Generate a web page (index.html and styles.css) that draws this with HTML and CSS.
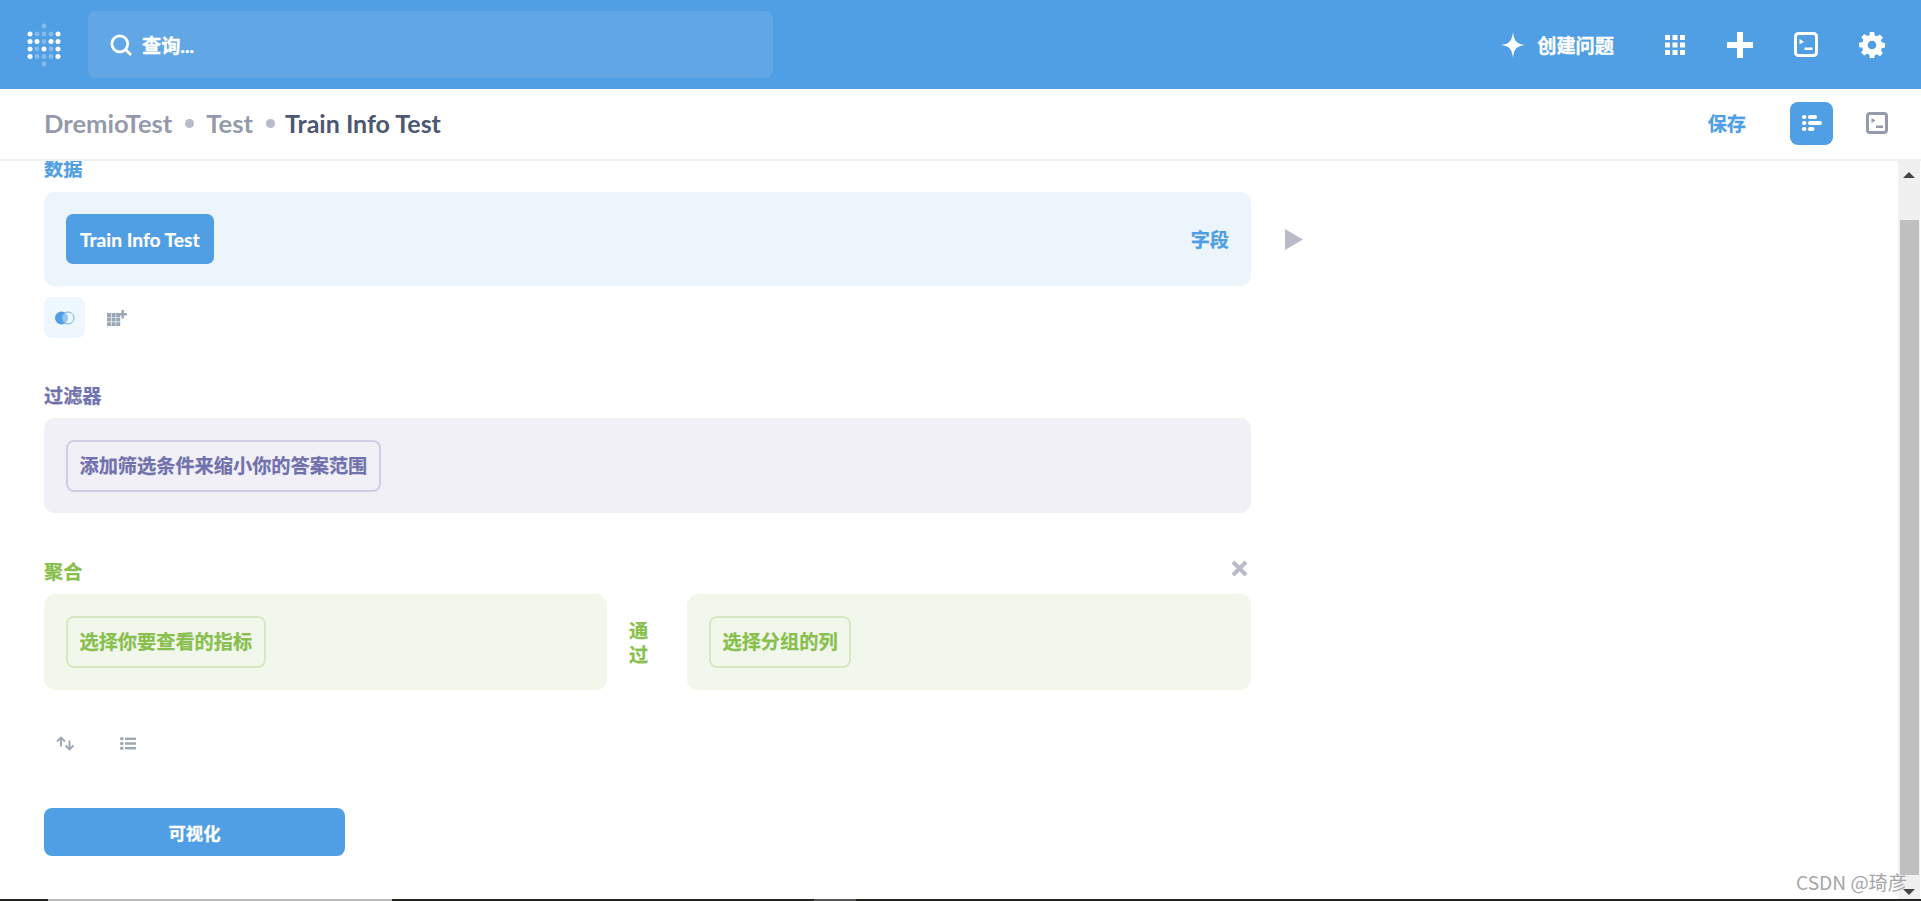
FILE: index.html
```html
<!DOCTYPE html>
<html lang="zh">
<head>
<meta charset="utf-8">
<title>Train Info Test</title>
<link rel="stylesheet" href="styles.css">
</head>
<body>
<div class="app">
  <header class="topbar">
    <svg class="logo" width="36" height="44" viewBox="0 0 36 44">
      <g fill="#fff" fill-opacity=".3">
        <circle cx="18" cy="3" r="2.4"/><circle cx="11" cy="11" r="2.4"/><circle cx="18" cy="11" r="2.4"/><circle cx="25" cy="11" r="2.4"/>
        <circle cx="18" cy="18.500" r="2.4"/><circle cx="11" cy="26" r="2.4"/><circle cx="25" cy="26" r="2.4"/>
        <circle cx="11" cy="33.500" r="2.4"/><circle cx="18" cy="33.500" r="2.4"/><circle cx="25" cy="33.500" r="2.4"/><circle cx="18" cy="41" r="2.4"/>
      </g>
      <g fill="#fff">
        <circle cx="4" cy="11" r="2.500"/><circle cx="32" cy="11" r="2.500"/>
        <circle cx="4" cy="18.500" r="2.500"/><circle cx="11" cy="18.500" r="2.500"/><circle cx="25" cy="18.500" r="2.500"/><circle cx="32" cy="18.500" r="2.500"/>
        <circle cx="4" cy="26" r="2.500"/><circle cx="18" cy="26" r="2.500"/><circle cx="32" cy="26" r="2.500"/>
        <circle cx="4" cy="33.500" r="2.500"/><circle cx="32" cy="33.500" r="2.500"/>
      </g>
    </svg>
    <div class="search">
      <svg width="22" height="22" viewBox="0 0 22 22" fill="none" stroke="#fff" stroke-width="2.800"><circle cx="9.800" cy="9.800" r="8"/><path d="M15.500 15.500l5.500 5.500"/></svg>
      <span>查询...</span>
    </div>
    <div class="top-actions">
      <div class="ask">
        <svg width="24" height="26" viewBox="0 0 24 26"><path fill="#fff" d="M12 0C13.200 9 15.200 11.800 24 13 15.200 14.200 13.200 17 12 26 10.800 17 8.800 14.200 0 13 8.800 11.800 10.800 9 12 0z"/></svg>
        <span>创建问题</span>
      </div>
      <svg class="ic-grid" width="20" height="20" viewBox="0 0 20 20" fill="#fff"><rect width="5" height="5"/><rect x="7.500" width="5" height="5"/><rect x="15" width="5" height="5"/><rect y="7.500" width="5" height="5"/><rect x="7.500" y="7.500" width="5" height="5"/><rect x="15" y="7.500" width="5" height="5"/><rect y="15" width="5" height="5"/><rect x="7.500" y="15" width="5" height="5"/><rect x="15" y="15" width="5" height="5"/></svg>
      <svg class="ic-plus" width="26" height="26" viewBox="0 0 26 26" fill="#fff"><path d="M10 0h6v10h10v6H16v10h-6V16H0v-6h10z"/></svg>
      <svg class="ic-sql" width="24" height="25" viewBox="0 0 24 25"><rect x="1.500" y="1.500" width="21" height="22" rx="3" fill="none" stroke="#fff" stroke-width="3"/><path fill="#fff" d="M5.500 7l4.500 2.800-4.500 2.800zM10.500 15.500h8V18h-8z"/></svg>
      <svg class="ic-gear" width="26" height="26" viewBox="0 0 24 24"><path fill="#fff" fill-rule="evenodd" d="M10 0h4l.6 3.200 2 .8L19.300 2.200l2.800 2.800-1.800 2.700.8 2 3.200.6v4l-3.200.6-.8 2 1.800 2.700-2.800 2.800-2.700-1.800-2 .8L14 24h-4l-.6-3.200-2-.8-2.700 1.800-2.800-2.800 1.800-2.700-.8-2L0 14v-4l3.200-.6.8-2L2.200 4.700 5 1.900l2.700 1.800 2-.8zM12 8a4 4 0 1 0 0 8 4 4 0 0 0 0-8z"/></svg>
    </div>
  </header>
  <div class="subbar">
    <div class="crumbs">
      <span class="crumb">DremioTest</span><i class="dot"></i>
      <span class="crumb">Test</span><i class="dot"></i>
      <span class="crumb current">Train Info Test</span>
    </div>
    <div class="sub-actions">
      <span class="save">保存</span>
      <div class="editor-btn">
        <svg width="20" height="16" viewBox="0 0 20 16" fill="#fff"><rect width="4.500" height="4" rx="2"/><rect x="6" width="9" height="4" rx="2"/><rect y="6" width="4.500" height="4" rx="2"/><rect x="6" y="6" width="14" height="4" rx="2"/><rect y="12" width="4.500" height="4" rx="2"/><rect x="6" y="12" width="6.500" height="4" rx="2"/></svg>
      </div>
      <svg class="sub-sql" width="22" height="22" viewBox="0 0 22 22"><rect x="1.500" y="1.500" width="19" height="19" rx="2.500" fill="none" stroke="#949aab" stroke-width="3"/><path fill="#949aab" d="M5.500 6l4 2.500-4 2.500zM10 13.500h7V16h-7z"/></svg>
    </div>
  </div>
  <div class="body-row">
    <main class="content">
      <div class="label label-data">数据</div>
      <div class="data-row">
        <div class="panel panel-data">
          <span class="pill">Train Info Test</span>
          <span class="fields">字段</span>
        </div>
        <svg class="play" width="18" height="21" viewBox="0 0 18 21"><path fill="#b8bbc8" d="M0 0l18 10.500L0 21z"/></svg>
      </div>
      <div class="tools tools-data">
        <div class="tool active">
          <svg width="20" height="14" viewBox="0 0 20 14"><circle cx="6.500" cy="7" r="6.500" fill="#509ee3"/><circle cx="13" cy="7" r="6" fill="#eef6fe" fill-opacity=".45" stroke="#6db1ea" stroke-width="1"/></svg>
        </div>
        <div class="tool">
          <svg width="20" height="16" viewBox="0 0 20 16" fill="#9aa7b4"><path d="M0 3h4v4H0zM4.600 3h4v4h-4zM9.200 3h4v4h-4zM0 7.600h4v4H0zM4.600 7.600h4v4h-4zM9.200 7.600h4v4h-4zM0 12.200h4V16H0zM4.600 12.200h4V16h-4zM9.200 12.200h4V16h-4z"/><path d="M14.500 0h2.400v3H20v2.400h-3.100v3h-2.400v-3h-3V3h3z"/></svg>
        </div>
      </div>
      <div class="label label-filter">过滤器</div>
      <div class="panel panel-filter">
        <span class="ghost ghost-filter">添加筛选条件来缩小你的答案范围</span>
      </div>
      <div class="label-row">
        <div class="label label-sum">聚合</div>
        <svg class="close" width="17" height="17" viewBox="0 0 17 17"><path d="M2 2l13 13M15 2L2 15" stroke="#b8bbc8" stroke-width="4" fill="none"/></svg>
      </div>
      <div class="sum-row">
        <div class="panel panel-sum"><span class="ghost ghost-sum">选择你要查看的指标</span></div>
        <div class="by">通过</div>
        <div class="panel panel-sum"><span class="ghost ghost-sum">选择分组的列</span></div>
      </div>
      <div class="tools tools-sort">
        <div class="tool">
          <svg width="18" height="15" viewBox="0 0 18 15" fill="none" stroke="#9aa7b4" stroke-width="1.900"><path d="M5 10.500V1.500M1 5.500l4-4 4 4M13.500 4.500v9M9.500 9.500l4 4 4-4"/></svg>
        </div>
        <div class="tool">
          <svg width="16" height="13" viewBox="0 0 16 13" fill="#9aa7b4"><circle cx="1.800" cy="1.800" r="1.800"/><circle cx="1.800" cy="6.500" r="1.800"/><circle cx="1.800" cy="11.200" r="1.800"/><rect x="5" y=".6" width="11" height="2.400"/><rect x="5" y="5.300" width="11" height="2.400"/><rect x="5" y="10" width="11" height="2.400"/></svg>
        </div>
      </div>
      <button class="viz">可视化</button>
    </main>
    <div class="scrollbar">
      <i class="arrow up"></i>
      <div class="thumb"></div>
      <i class="arrow down"></i>
    </div>
  </div>
  <div class="taskbar"><i class="tb-light one"></i><i class="tb-light two"></i></div>
  <div class="watermark">CSDN @琦彦</div>
</div>
</body>
</html>
```
FILE: styles.css
```css
* { box-sizing: border-box; }
html, body { margin: 0; height: 100%; overflow: hidden; background: #fff; }
body { font-family: Lato, "Noto Sans CJK SC", sans-serif; font-weight: 700; font-size: 19.2px; }
.app { position: relative; display: flex; flex-direction: column; height: 901px; }

.topbar { flex: none; height: 89px; background: #509ee3; display: flex; align-items: center; padding-left: 26px; color: #fff; }
.logo { flex: none; margin-right: 26px; }
.search { width: 685px; height: 67px; background: rgba(255,255,255,.1); border-radius: 8px; display: flex; align-items: center; gap: 10px; padding-left: 22px; -webkit-text-stroke: .35px #fff; }
.top-actions { margin-left: auto; display: flex; align-items: center; padding-right: 36px; }
.ask { display: flex; align-items: center; gap: 12px; margin-right: 51px; -webkit-text-stroke: .35px #fff; }
.ic-grid { margin-right: 42px; }
.ic-plus { margin-right: 41px; }
.ic-sql { margin-right: 41px; }

.subbar { flex: none; height: 72px; border-bottom: 2px solid #f0f0f0; display: flex; align-items: center; justify-content: space-between; padding: 0 33px 2px 44px; }
.crumbs { display: flex; align-items: center; font-size: 25.6px; color: #949aab; }
.crumb.current { color: #4c5773; font-size: 25px; margin-left: -2px; }
.dot { width: 9px; height: 9px; border-radius: 50%; background: #b8bbc8; margin: 0 12.500px; }
.sub-actions { display: flex; align-items: center; }
.save { color: #509ee3; margin-right: 44px; -webkit-text-stroke: .25px #509ee3; }
.editor-btn { width: 43px; height: 43px; border-radius: 8px; background: #509ee3; display: flex; align-items: center; justify-content: center; margin-right: 33px; }

.body-row { flex: 1; min-height: 0; display: flex; }
.content { flex: 1; min-width: 0; padding-left: 44px; overflow: hidden; }
.label { line-height: 22px; }
.label-data { color: #509ee3; margin-top: -3px; margin-bottom: 12px; -webkit-text-stroke: .25px #509ee3; }
.label-filter { color: #7172ad; margin-top: 47px; margin-bottom: 11px; -webkit-text-stroke: .25px #7172ad; }
.label-sum { color: #88bf4d; -webkit-text-stroke: .25px #88bf4d; }
.label-row { width: 1207px; display: flex; justify-content: space-between; align-items: flex-start; margin-top: 48px; margin-bottom: 11px; }
.close { margin-top: -1px; margin-right: 3px; }

.data-row { display: flex; align-items: center; }
.panel { height: 95px; border-radius: 11px; display: flex; align-items: center; padding: 0 22px; }
.panel-data { width: 1207px; height: 94px; background: #ecf4fc; justify-content: space-between; }
.play { margin-left: 34px; }
.pill { height: 50px; line-height: 52px; padding: 0 14px; background: #509ee3; color: #fff; border-radius: 7px; -webkit-text-stroke: .2px #fff; }
.fields { color: #509ee3; -webkit-text-stroke: .25px #509ee3; }

.tools { display: flex; }
.tools-data { margin-top: 11px; }
.tool { width: 41px; height: 41px; border-radius: 8px; display: flex; align-items: center; justify-content: center; }
.tool.active { background: #eef6fe; }
.tools-data .tool + .tool { margin-left: 11px; }
.tools-sort { margin-top: 33px; }
.tools-sort .tool + .tool { margin-left: 22px; }

.panel-filter { width: 1207px; background: #f1f0f7; }
.ghost { height: 52px; line-height: 48px; padding: 0 11.500px; border-radius: 8px; border: 2px solid; }
.ghost-filter { color: #7172ad; border-color: #cfcfe3; -webkit-text-stroke: .25px #7172ad; }
.ghost-sum { color: #88bf4d; border-color: #d7e8c5; -webkit-text-stroke: .25px #88bf4d; }

.sum-row { width: 1207px; display: flex; align-items: center; }
.panel-sum { flex: 1; height: 96px; background: #f2f7ec; }
.panel-sum:first-child { flex: none; width: 563px; }
.by { width: 80px; padding: 2px 22px 0; color: #88bf4d; line-height: 24px; -webkit-text-stroke: .25px #88bf4d; }

.viz { display: block; width: 301px; height: 48px; margin-top: 44px; border: 0; border-radius: 8px; background: #509ee3; color: #fff; font: inherit; font-size: 17.300px; -webkit-text-stroke: .3px #fff; }

.scrollbar { flex: none; width: 23px; background: #f0f0f0; border-right: 1px solid #fff; padding: 0 1px 0 2px; position: relative; }
.thumb { position: absolute; left: 2px; right: 1px; top: 59px; bottom: 24px; background: #bfbfbf; }
.arrow { position: absolute; left: 5px; width: 0; height: 0; border-left: 6px solid transparent; border-right: 6px solid transparent; }
.arrow.up { top: 11px; border-bottom: 6px solid #444; }
.arrow.down { bottom: 4px; border-top: 6px solid #444; }

.taskbar { flex: none; height: 2px; background: #22231d; display: flex; position: relative; }
.tb-light { position: absolute; top: 0; height: 2px; }
.tb-light.one { left: 48px; width: 344px; background: #bdbdbd; }
.tb-light.two { left: 814px; width: 42px; background: #555; }

.watermark { position: absolute; right: 14px; bottom: 7px; font-family: "Noto Sans CJK SC", sans-serif; font-weight: 400; font-size: 19.2px; line-height: 24px; color: #a6a6a6; }
```
